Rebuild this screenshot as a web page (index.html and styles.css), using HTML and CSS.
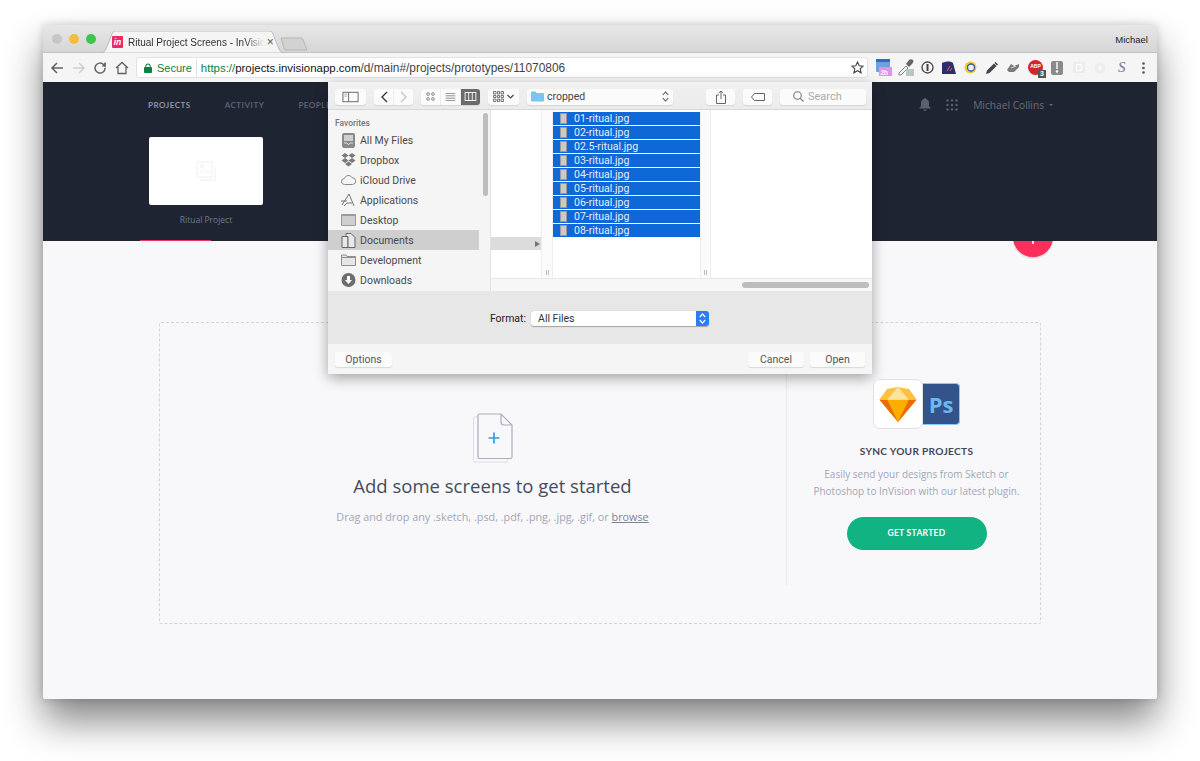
FILE: index.html
```html
<!DOCTYPE html>
<html lang="en">
<head>
<meta charset="utf-8">
<title>Ritual Project Screens - InVision</title>
<link rel="stylesheet" href="styles.css">
</head>
<body>
<div class="window">
  <div class="titlebar">
    <div class="lights"><i class="light l-grey"></i><i class="light l-yellow"></i><i class="light l-green"></i></div>
    <div class="tab">
      <svg class="tab-shape" width="185" height="22" viewBox="0 0 185 22"><path d="M0 22c4 0 5-2 6-4L12 3c.6-2 1.600-3 4-3h153c2.400 0 3.400 1 4 3l6 15c1 2 2 4 6 4z" fill="#f5f5f5" stroke="#bdbdbd"/></svg>
      <span class="favicon">in</span>
      <span class="tab-title">Ritual Project Screens - InVisio</span>
      <span class="tab-close">×</span>
    </div>
    <svg class="newtab" width="28" height="14" viewBox="0 0 28 14"><path d="M1 1h20c1 0 1.500.5 2 1.500L27 13H6c-1 0-1.500-.5-2-1.500z" fill="#d2d2d2" stroke="#b5b5b5"/></svg>
    <span class="profile">Michael</span>
  </div>
  <div class="toolbar">
    <svg class="nav" width="16" height="16" viewBox="0 0 16 16"><path d="M14 8H3M8 3L3 8l5 5" fill="none" stroke="#5f6368" stroke-width="1.500"/></svg>
    <svg class="nav" width="16" height="16" viewBox="0 0 16 16"><path d="M2 8h11M8 3l5 5-5 5" fill="none" stroke="#cfcfcf" stroke-width="1.500"/></svg>
    <svg class="nav" width="16" height="16" viewBox="0 0 16 16"><path d="M13 8a5 5 0 1 1-1.500-3.500L13 6V2.500" fill="none" stroke="#5f6368" stroke-width="1.500"/><path d="M13.500 6.500H9.500l4-4z" fill="#5f6368"/></svg>
    <svg class="nav" width="16" height="16" viewBox="0 0 16 16"><path d="M2 8l6-5.500L14 8M4 7v6.500h8V7" fill="none" stroke="#5f6368" stroke-width="1.300"/></svg>
    <div class="omnibox">
      <svg class="lock" width="8" height="10" viewBox="0 0 9 11"><path d="M2 5V3.500a2.500 2.500 0 0 1 5 0V5" fill="none" stroke="#0b8043" stroke-width="1.200"/><rect y="4.500" width="9" height="6.500" rx="1" fill="#0b8043"/></svg>
      <span class="secure">Secure</span>
      <span class="url"><span class="https">https://</span>projects.invisionapp.com<span class="path">/d/main#/projects/prototypes/11070806</span></span>
      <svg class="star" width="13" height="13" viewBox="0 0 13 13"><path d="M6.500 1l1.700 3.700 4 .4-3 2.700.9 4-3.600-2.100-3.600 2.100.9-4-3-2.700 4-.4z" fill="none" stroke="#444" stroke-width="1.100"/></svg>
    </div>
    <div class="exts">
      <svg width="16" height="17" viewBox="0 0 16 17"><rect x="0" y="0" width="14" height="13" rx="1" fill="#6f9fe0"/><rect x="0" y="0" width="14" height="3" fill="#2f6cc0"/><rect x="3" y="8" width="13" height="9" fill="#d995e6"/><text x="4.500" y="15.500" class="ext-text">2h</text></svg>
      <svg width="16" height="17" viewBox="0 0 16 17"><path d="M1 14l7-7 2 2-7 7H1z" fill="#f2f2f2" stroke="#8b8b8b"/><path d="M8 5l3-4c1-1 3-1 4 0s0 3-1 4l-3 3z" fill="#666"/><rect x="8" y="10" width="8" height="7" fill="#b9c7c3"/></svg>
      <svg width="13" height="13" viewBox="0 0 13 13"><circle cx="6.500" cy="6.500" r="5.500" fill="none" stroke="#444" stroke-width="1.300"/><rect x="5.500" y="3" width="2" height="7" fill="#444"/></svg>
      <svg width="14" height="13" viewBox="0 0 14 13"><path d="M0 13V2c4-2 9-2 11 0l3 11z" fill="#27306e"/><path d="M5 10l3-5M8 10l2-3" stroke="#e14b4b" stroke-width="1.200"/></svg>
      <svg width="13" height="13" viewBox="0 0 13 13"><circle cx="6.500" cy="6.500" r="6" fill="#f1c836"/><circle cx="7" cy="6.500" r="3.500" fill="#f5f0d8" stroke="#2c5fa8" stroke-width="1.300"/></svg>
      <svg width="12" height="12" viewBox="0 0 12 12"><path d="M0 12l1-3.500L8 1.500 10.500 4l-7 7z" fill="#444"/><path d="M9 .5l2.500 2.500" stroke="#444" stroke-width="1.500"/></svg>
      <svg width="13" height="11" viewBox="0 0 13 11"><path d="M0 8l4-6 3 2 5-2v3l-5 5H2z" fill="#7a7a7a"/><path d="M4 6l5-2" stroke="#ddd"/></svg>
      <span class="adblock"><span class="ab-text">ABP</span><span class="ab-num">3</span></span>
      <svg width="12" height="14" viewBox="0 0 12 14"><rect width="12" height="14" rx="2" fill="#8a8a8a"/><path d="M6 1v7" stroke="#fff" stroke-width="1.400"/><circle cx="6" cy="10.500" r="1.300" fill="#fff"/></svg>
      <svg width="12" height="11" viewBox="0 0 12 11"><rect width="12" height="11" rx="1.500" fill="#ececec"/><rect x="3.500" y="2.500" width="5" height="6" fill="none" stroke="#fff" stroke-width="1.300"/></svg>
      <svg width="12" height="12" viewBox="0 0 12 12"><circle cx="6" cy="6" r="5.500" fill="#ededed"/><circle cx="6" cy="6" r="2" fill="#f8f8f8"/></svg>
      <span class="ext-s">S</span>
      <svg class="kebab" width="3" height="12" viewBox="0 0 3 12"><circle cx="1.500" cy="1.500" r="1.300"/><circle cx="1.500" cy="6" r="1.300"/><circle cx="1.500" cy="10.500" r="1.300"/></svg>
    </div>
  </div>

  <header class="app-header">
    <nav class="app-nav">
      <span class="nav-item is-active">PROJECTS</span>
      <span class="nav-item">ACTIVITY</span>
      <span class="nav-item">PEOPLE</span>
      <div class="nav-right">
        <svg width="12" height="13" viewBox="0 0 12 13"><path d="M6 0c.6 0 1 .4 1 1 2 .5 3 2 3 4v3l2 2.500H0L2 8V5c0-2 1-3.500 3-4 0-.6.400-1 1-1zM4.500 11.500h3a1.500 1.500 0 0 1-3 0z" fill="#5b606e"/></svg>
        <svg class="grid-icon" width="12" height="12" viewBox="0 0 12 12" fill="#5b606e"><circle cx="1.500" cy="1.500" r="1.200"/><circle cx="6" cy="1.500" r="1.200"/><circle cx="10.500" cy="1.500" r="1.200"/><circle cx="1.500" cy="6" r="1.200"/><circle cx="6" cy="6" r="1.200"/><circle cx="10.500" cy="6" r="1.200"/><circle cx="1.500" cy="10.500" r="1.200"/><circle cx="6" cy="10.500" r="1.200"/><circle cx="10.500" cy="10.500" r="1.200"/></svg>
        <span class="user">Michael Collins</span><span class="user-caret"></span>
      </div>
    </nav>
    <div class="project-card">
      <div class="thumb">
        <svg width="20" height="20" viewBox="0 0 20 20" fill="none" stroke="#f0f0f2"><rect x="1" y="1" width="15" height="15"/><path d="M4 19h15V5M3 13l4-4 3 3 3-2 3 3"/><circle cx="6" cy="5" r="1.500"/></svg>
      </div>
      <div class="thumb-label">Ritual Project</div>
    </div>
    <div class="active-bar"></div>
  </header>

  <main class="content">
    <div class="fab-clip"><div class="fab"><span class="fab-plus"></span></div></div>
    <div class="dropzone">
      <section class="drop-left">
        <svg class="doc-icon" width="40" height="50" viewBox="0 0 40 50" fill="none"><path d="M5 4H2a1.500 1.500 0 0 0-1.500 1.500v42A1.500 1.500 0 0 0 2 49h31a1.500 1.500 0 0 0 1.500-1.500V46" stroke="#dcdee6"/><path d="M6 1h22l11 11v32a1.500 1.500 0 0 1-1.500 1.500h-31A1.500 1.500 0 0 1 5 44V2.500A1.500 1.500 0 0 1 6 1z" fill="#f8f8fb" stroke="#a9adbd" stroke-width="1.200"/><path d="M28 1v8a3 3 0 0 0 3 3h8" stroke="#a9adbd" stroke-width="1.200"/><path d="M15.500 25h11M21 19.500v11" stroke="#2a9fe9" stroke-width="1.700"/></svg>
        <h1 class="drop-title">Add some screens to get started</h1>
        <p class="drop-text">Drag and drop any .sketch, .psd, .pdf, .png, .jpg, .gif, or <u>browse</u></p>
      </section>
      <aside class="drop-right">
        <div class="app-logos">
          <span class="sketch-tile">
            <svg width="38" height="35" viewBox="0 0 38 36"><path d="M19 36L0 13 8 2h22l8 11z" fill="#fdb300"/><path d="M0 13h38L19 36z" fill="#ea6c00"/><path d="M8 13h22L19 36z" fill="#fdad00"/><path d="M8 2l11-2 11 2 8 11H0z" fill="#fdc340"/><path d="M8 13L19 0l11 13z" fill="#fee3a0"/></svg>
          </span>
          <span class="ps-tile">Ps</span>
        </div>
        <h2 class="sync-title">SYNC YOUR PROJECTS</h2>
        <p class="sync-text">Easily send your designs from Sketch or<br>Photoshop to InVision with our latest plugin.</p>
        <a class="sync-btn">GET STARTED</a>
      </aside>
    </div>
  </main>

  <div class="dialog">
    <div class="d-toolbar">
      <span class="d-btn b-side"><svg width="17" height="12" viewBox="0 0 18 12" fill="none" stroke="#666"><rect x="1" y="1" width="16" height="10"/><path d="M7 1v10"/><path d="M2.500 3h3M2.500 5h3" stroke="#aaa"/></svg></span>
      <span class="d-group g-nav">
        <span class="d-seg s-nav"><svg width="8" height="12" viewBox="0 0 8 12" fill="none" stroke="#333" stroke-width="1.300"><path d="M7 1L2 6l5 5"/></svg></span>
        <span class="d-seg s-nav"><svg width="8" height="12" viewBox="0 0 8 12" fill="none" stroke="#c4c4c4" stroke-width="1.300"><path d="M1 1l5 5-5 5"/></svg></span>
      </span>
      <span class="d-group g-view">
        <span class="d-seg s-view"><svg width="9" height="9" viewBox="0 0 11 11" fill="none" stroke="#666"><rect x="1" y="1" width="3" height="3" rx="1"/><rect x="7" y="1" width="3" height="3" rx="1"/><rect x="1" y="7" width="3" height="3" rx="1"/><rect x="7" y="7" width="3" height="3" rx="1"/></svg></span>
        <span class="d-seg s-view"><svg width="11" height="8" viewBox="0 0 12 10" stroke="#777"><path d="M0 .5h12M0 3.500h12M0 6.500h12M0 9.500h12"/></svg></span>
        <span class="d-seg s-view is-on"><svg width="13" height="9" viewBox="0 0 13 10" fill="none" stroke="#fff"><rect x=".5" y=".5" width="12" height="9"/><path d="M4.500 .5v9M8.500 .5v9"/></svg></span>
      </span>
      <span class="d-btn b-arrange"><svg width="11" height="11" viewBox="0 0 11 11" fill="none" stroke="#777"><path d="M.5.500h2.500v2.500H.5zM4.500.500h2v2.500h-2zM8 .5h2.500v2.500H8zM.5 4.500h2.500v2H.5zM4.500 4.500h2v2h-2zM8 4.500h2.500v2H8zM.5 8h2.500v2.500H.5zM4.500 8h2v2.500h-2zM8 8h2.500v2.500H8z"/></svg><svg width="7" height="5" viewBox="0 0 7 5" fill="none" stroke="#444" stroke-width="1.200"><path d="M.5 1l3 3 3-3"/></svg></span>
      <span class="d-btn b-path">
        <svg width="13" height="11" viewBox="0 0 13 10"><path d="M0 1a1 1 0 0 1 1-1h3.500l1 1.500H12a1 1 0 0 1 1 1V9a1 1 0 0 1-1 1H1a1 1 0 0 1-1-1z" fill="#79c6f2"/></svg>
        <span class="path-name">cropped</span>
        <svg class="updown" width="7" height="11" viewBox="0 0 7 11" fill="none" stroke="#555" stroke-width="1.100"><path d="M.8 4l2.700-3 2.700 3M.8 7l2.700 3 2.700-3"/></svg>
      </span>
      <span class="d-btn b-share"><svg width="10" height="14" viewBox="0 0 10 14" fill="none" stroke="#666"><path d="M3 5H.5v8.500h9V5H7M5 9V1M2.800 3L5 1l2.200 2"/></svg></span>
      <span class="d-btn b-tag"><svg width="14" height="8" viewBox="0 0 14 8" fill="none" stroke="#666"><path d="M3.500.5H13.500v7H3.500L.5 4z"/></svg></span>
      <span class="d-btn b-search"><svg width="11" height="11" viewBox="0 0 11 11" fill="none" stroke="#777" stroke-width="1.100"><circle cx="4.500" cy="4.500" r="3.800"/><path d="M7.300 7.300L10.500 10.500"/></svg><span class="search-ph">Search</span></span>
    </div>
    <div class="browser">
      <div class="sidebar">
        <div class="side-head">Favorites</div>
        <div class="side-item"><svg width="15" height="15" viewBox="0 0 15 15"><rect x="1" y="0" width="13" height="15" rx="2" fill="#8a8a8a"/><rect x="3" y="2" width="9" height="6" fill="#cfcfcf"/><path d="M3 10h3l1 1.500h1l1-1.500h3" stroke="#ddd" fill="none"/></svg>All My Files</div>
        <div class="side-item"><svg width="15" height="14" viewBox="0 0 15 14" fill="#7a7a7a"><path d="M4 0l3.500 2.500L4 5 .5 2.500zM11 0l3.500 2.500L11 5 7.500 2.500zM4 5l3.500 2.500L4 10 .5 7.500zM11 5l3.500 2.500L11 10 7.500 7.500zM4 11l3.500-2.500L11 11l-3.500 2.500z"/></svg>Dropbox</div>
        <div class="side-item"><svg width="15" height="10" viewBox="0 0 15 10" fill="none" stroke="#8a8a8a"><path d="M3.500 9.500a3 3 0 0 1 0-6 4 4 0 0 1 7.500-.8 3.400 3.400 0 0 1 .5 6.800z"/></svg>iCloud Drive</div>
        <div class="side-item"><svg width="15" height="14" viewBox="0 0 15 14" fill="none" stroke="#777"><path d="M1 12L8 1l5 12M0 8h6M3 13l3-3h5"/></svg>Applications</div>
        <div class="side-item"><svg width="15" height="12" viewBox="0 0 15 12"><rect width="15" height="12" rx="1" fill="#9b9b9b"/><rect x="1" y="2" width="13" height="9" fill="#cfcfcf"/></svg>Desktop</div>
        <div class="side-item is-selected"><svg width="14" height="15" viewBox="0 0 14 15" fill="#e8e8e8" stroke="#666"><path d="M.5 3.500h6v11h-6z"/><path d="M4.500.5h5l4 4v10h-7v-11h-2z"/></svg>Documents</div>
        <div class="side-item"><svg width="15" height="12" viewBox="0 0 15 12" fill="#e6e6e6" stroke="#8f8f8f"><path d="M.5 11.500V1h4.500l1 1.500h8.500v9z"/><path d="M.5 3.500h14"/></svg>Development</div>
        <div class="side-item"><svg width="14" height="14" viewBox="0 0 14 14"><circle cx="7" cy="7" r="7" fill="#6e6e6e"/><path d="M5.500 3h3v4h2L7 11 3.500 7h2z" fill="#fff"/></svg>Downloads</div>
        <div class="side-scroll"></div>
      </div>
      <div class="columns">
        <div class="cols">
          <div class="col col-a"><div class="parent-row"><span class="tri"></span></div></div>
          <div class="col-handle"><span class="grip"></span></div>
          <div class="col col-b">
            <div class="file"><i class="file-ico"></i>01-ritual.jpg</div>
            <div class="file"><i class="file-ico"></i>02-ritual.jpg</div>
            <div class="file"><i class="file-ico"></i>02.5-ritual.jpg</div>
            <div class="file"><i class="file-ico"></i>03-ritual.jpg</div>
            <div class="file"><i class="file-ico"></i>04-ritual.jpg</div>
            <div class="file"><i class="file-ico"></i>05-ritual.jpg</div>
            <div class="file"><i class="file-ico"></i>06-ritual.jpg</div>
            <div class="file"><i class="file-ico"></i>07-ritual.jpg</div>
            <div class="file"><i class="file-ico"></i>08-ritual.jpg</div>
          </div>
          <div class="col-handle handle-b"><span class="grip"></span></div>
          <div class="col col-c"></div>
        </div>
        <div class="hscroll"><span class="hthumb"></span></div>
      </div>
    </div>
    <div class="format-row">
      <span class="format-label">Format:</span>
      <span class="format-select">All Files<span class="format-stepper"><svg width="7" height="11" viewBox="0 0 7 11" fill="none" stroke="#fff" stroke-width="1.200"><path d="M.8 4l2.700-3 2.700 3M.8 7l2.700 3 2.700-3"/></svg></span></span>
    </div>
    <div class="d-footer">
      <span class="f-btn f-options">Options</span>
      <span class="f-btn f-cancel">Cancel</span>
      <span class="f-btn f-open">Open</span>
    </div>
  </div>
</div>
</body>
</html>
```

FILE: styles.css
```css
* { box-sizing: border-box; }
html, body { margin: 0; height: 761px; overflow: hidden; }
body { background: #fff; padding: 25px 43px 0; font-family: "Open Sans", sans-serif; }

.window {
  position: relative;
  width: 1114px;
  height: 674px;
  border-radius: 4px 4px 2px 2px;
  background: #f8f8fb;
  box-shadow: 0 22px 38px rgba(0,0,0,.48), 0 0 8px rgba(0,0,0,.18);
  display: flex;
  flex-direction: column;
}

/* Browser chrome */
.titlebar {
  height: 28px;
  flex: none;
  display: flex;
  align-items: flex-end;
  background: linear-gradient(#e7e7e7, #d6d6d6);
  border-bottom: 1px solid #c4c4c4;
  border-radius: 4px 4px 0 0;
  font-family: "Liberation Sans", sans-serif;
}
.lights { display: flex; gap: 7px; padding: 0 0 8px 9px; width: 58px; flex: none; }
.light { width: 10px; height: 10px; border-radius: 50%; flex: none; }
.l-grey { background: #c7c7c7; }
.l-yellow { background: #f5bd3f; }
.l-green { background: #3cc64c; }
.tab {
  position: relative;
  width: 185px;
  height: 22px;
  margin-bottom: -1px;
  margin-left: -1px;
  flex: none;
  display: flex;
  align-items: center;
  padding: 0 0 0 12px;
}
.tab-shape { position: absolute; left: 0; top: 0; }
.favicon {
  position: relative;
  width: 11px;
  height: 12px;
  background: #ed2b62;
  color: #fff;
  border-radius: 1px;
  font: italic bold 8.500px/12px "Liberation Sans", sans-serif;
  text-align: center;
  flex: none;
}
.tab-title {
  position: relative;
  margin-left: 5px;
  flex: none;
  white-space: nowrap;
  font-size: 10px;
  color: #333;
  -webkit-mask-image: linear-gradient(90deg, #000 85%, transparent 99%);
  mask-image: linear-gradient(90deg, #000 85%, transparent 99%);
}
.tab-close { position: relative; margin-left: 1px; font-size: 12px; color: #555; line-height: 12px; flex: none; }
.newtab { margin: 0 0 1px -5px; flex: none; }
.profile { margin-left: auto; padding: 0 9px 7px 0; font-size: 9.500px; color: #222; }

.toolbar {
  height: 29px;
  flex: none;
  display: flex;
  align-items: center;
  background: #f5f5f5;
  padding-left: 6px;
  gap: 5.500px;
  font-family: "Liberation Sans", sans-serif;
}
.nav { flex: none; }
.omnibox {
  width: 732px;
  height: 21px;
  margin-left: 1px;
  flex: none;
  display: flex;
  align-items: center;
  background: #fff;
  border: 1px solid #e2e2e2;
  border-radius: 3px;
  padding: 0 3px 0 7px;
  font-size: 11.450px;
  white-space: nowrap;
}
.lock { flex: none; }
.secure { color: #0b8043; margin-left: 5px; font-size: 11px; padding-right: 4px; border-right: 1px solid #ddd; line-height: 18px; }
.url { margin-left: 4px; color: #111; }
.https { color: #0b8043; }
.path { color: #444; font-size: 11.900px; }
.star { margin-left: auto; }
.exts {
  flex: 1;
  display: grid;
  grid-template-columns: repeat(13, 21.600px);
  align-items: center;
  justify-items: center;
}
.ext-text { font: 700 6.500px "Liberation Sans", sans-serif; fill: #fff; }
.adblock {
  position: relative;
  width: 15px;
  height: 15px;
  border-radius: 50%;
  background: #d8232a;
  text-align: center;
}
.ab-text { display: block; color: #fff; font: 700 5px/13px "Liberation Sans", sans-serif; }
.ab-num {
  position: absolute;
  right: -3px;
  bottom: -3px;
  background: #555;
  color: #fff;
  font-size: 7px;
  line-height: 8px;
  padding: 0 2px;
  font-weight: 700;
}
.ext-s { font: italic 15px/1 "Liberation Serif", serif; color: #777; }
.kebab { fill: #555; }

/* App header */
.app-header {
  height: 159px;
  flex: none;
  position: relative;
  background: #1f2433;
  color: #7a7f8c;
}
.app-nav {
  height: 45px;
  display: flex;
  align-items: center;
  padding-left: 105px;
  gap: 34px;
}
.nav-item {
  font: 700 8px/1 "Lato", sans-serif;
  letter-spacing: .5px;
  color: #5c6170;
}
.nav-item.is-active { color: #8f93a0; }
.nav-right {
  margin-left: auto;
  display: flex;
  align-items: center;
  padding-right: 104px;
  color: #686d7b;
}
.grid-icon { margin-left: 15px; }
.user { margin-left: 15px; font-size: 10.200px; }
.user-caret {
  margin-left: 5px;
  margin-top: 2px;
  border: 2px solid transparent;
  border-top: 2px solid #686d7b;
}
.project-card { width: 114px; margin: 10px 0 0 106px; text-align: center; }
.thumb {
  height: 68px;
  background: #fff;
  border-radius: 2px;
  display: flex;
  align-items: center;
  justify-content: center;
}
.thumb-label { margin-top: 9px; font-size: 8.500px; color: #737886; }
.active-bar { position: absolute; left: 97px; bottom: 0; width: 71px; height: 1px; background: #f0325f; }

/* Drop zone */
.content { position: relative; flex: 1; padding: 81px 116px 0; }
.fab-clip {
  position: absolute;
  left: 970px;
  top: 0;
  width: 40px;
  height: 18px;
  overflow: hidden;
}
.fab {
  width: 40px;
  height: 40px;
  margin-top: -24px;
  border-radius: 50%;
  background: #fb2e5d;
  box-shadow: 0 1px 2px rgba(0,0,0,.2);
  display: flex;
  justify-content: center;
}
.fab-plus { width: 2px; height: 3px; background: #ffd9e2; margin-top: 24px; }
.dropzone {
  height: 302px;
  border: 1px dashed #d4d4da;
  border-radius: 2px;
  display: flex;
}
.drop-left {
  flex: 1;
  text-align: center;
  padding: 90px 0 0 39px;
}
.doc-icon { display: block; margin: 0 auto; }
.drop-title { margin: 10px 0 0; font-size: 18.500px; line-height: 26px; font-weight: 400; color: #454b5e; }
.drop-text { margin: 10px 0 0; font-size: 10.800px; line-height: 16px; color: #a2a6b5; }
.drop-text u { color: #7e8393; }
.drop-right {
  width: 254px;
  margin-top: 46px;
  height: 216px;
  border-left: 1px solid #e9e9ee;
  display: flex;
  flex-direction: column;
  align-items: center;
  padding: 10px 0 0 6px;
}
.app-logos { display: flex; align-items: center; height: 50px; }
.sketch-tile {
  position: relative;
  z-index: 1;
  width: 50px;
  height: 50px;
  background: #fff;
  border: 1px solid #dfe1e7;
  border-radius: 7px;
  display: flex;
  align-items: center;
  justify-content: center;
}
.ps-tile {
  width: 38px;
  height: 42px;
  margin-left: -1px;
  background: #33538a;
  border: 1px solid #8ac8f5;
  border-radius: 0 4px 4px 0;
  color: #6cb9f0;
  font: 700 22px/40px "Open Sans", sans-serif;
  text-align: center;
}
.sync-title { margin: 14px 0 0; font: 700 10.150px/16px "Lato", sans-serif; letter-spacing: .3px; color: #434859; }
.sync-text { margin: 7px 0 0; text-align: center; font-size: 10px; line-height: 17px; color: #a2a6b5; }
.sync-btn {
  margin-top: 17px;
  width: 140px;
  height: 33px;
  border-radius: 17px;
  background: #12b382;
  color: #fff;
  font: 700 8.500px/33px "Lato", sans-serif;
  letter-spacing: .3px;
  text-align: center;
}

/* Open dialog */
.dialog {
  position: absolute;
  left: 285px;
  top: 57px;
  width: 544px;
  height: 292px;
  background: #f5f5f5;
  box-shadow: 0 4px 14px rgba(0,0,0,.35);
  border-radius: 0 0 3px 3px;
  display: flex;
  flex-direction: column;
  font-family: "Roboto", "Liberation Sans", sans-serif;
  font-size: 10.500px;
  color: #444;
}
.d-toolbar {
  height: 28px;
  flex: none;
  display: flex;
  align-items: center;
  background: linear-gradient(#f1f1f1, #ebebeb);
  border-bottom: 1px solid #d8d8d8;
  padding: 2px 0 0 7px;
}
.d-btn, .d-seg {
  height: 16px;
  display: flex;
  align-items: center;
  justify-content: center;
  background: #fbfbfb;
  flex: none;
}
.d-btn { border-radius: 3px; box-shadow: 0 1px 1px rgba(0,0,0,.1); }
.d-group { display: flex; gap: 1px; border-radius: 3px; overflow: hidden; box-shadow: 0 1px 1px rgba(0,0,0,.1); flex: none; }
.b-side { width: 31px; }
.g-nav { margin-left: 8px; }
.s-nav { width: 19px; }
.g-view { margin-left: 8px; }
.s-view { width: 19px; }
.s-view.is-on { background: #6b6b6b; }
.b-arrange { width: 31px; margin-left: 8px; gap: 3px; }
.b-path { width: 146px; margin-left: 8px; justify-content: flex-start; padding: 0 4px; }
.path-name { margin-left: 3px; color: #444; }
.updown { margin-left: auto; }
.b-share { width: 29px; margin-left: 33px; }
.b-tag { width: 29px; margin-left: 8px; }
.b-search { width: 86px; margin-left: 8px; justify-content: flex-start; padding-left: 13px; gap: 4px; }
.search-ph { color: #aaa; font-size: 11px; }

.browser { flex: 1; display: flex; min-height: 0; }
.sidebar { position: relative; width: 163px; flex: none; background: #f5f5f5; border-right: 1px solid #e3e3e3; padding: 6px 0 0; overflow: hidden; }
.side-head { padding-left: 7px; font-size: 8.500px; line-height: 14px; font-weight: 500; color: #777; }
.side-item {
  height: 20px;
  width: 151px;
  display: flex;
  align-items: center;
  gap: 4px;
  padding-left: 13px;
  color: #4a4a4a;
}
.side-item.is-selected { background: #cfcfcf; }
.side-item svg { flex: none; width: 15px; }
.side-scroll { position: absolute; right: 2px; top: 3px; width: 5px; height: 83px; border-radius: 3px; background: #bdbdbd; }
.columns { flex: 1; display: flex; flex-direction: column; min-width: 0; }
.cols { flex: 1; display: flex; background: #fff; min-height: 0; }
.col { background: #fff; }
.col-a { width: 50px; padding-top: 127px; }
.parent-row { height: 13px; background: #dcdcdc; display: flex; align-items: center; justify-content: flex-end; padding-right: 1px; }
.tri { border: 3px solid transparent; border-left: 5px solid #777; border-right: 0; }
.col-handle { width: 12px; display: flex; align-items: flex-end; justify-content: center; padding-bottom: 3px; background: #fbfbfb; border-left: 1px solid #eee; border-right: 1px solid #eee; }
.handle-b { width: 11px; }
.grip { width: 3px; height: 5px; border-left: 1px solid #bbb; border-right: 1px solid #bbb; }
.col-b { width: 147px; padding-top: 2px; }
.col-c { flex: 1; }
.file {
  height: 13px;
  margin-bottom: 1px;
  display: flex;
  align-items: center;
  background: #0f68d8;
  color: #e4eefb;
  padding-left: 7px;
  line-height: 14px;
}
.file-ico { width: 7px; height: 11px; background: #cfc9c3; border: 1px solid #9a9a9a; margin-right: 7px; flex: none; }
.hscroll { height: 13px; flex: none; background: #f7f7f7; border-top: 1px solid #e8e8e8; position: relative; }
.hthumb { position: absolute; right: 3px; top: 3px; width: 127px; height: 6px; border-radius: 3px; background: #bdbdbd; }

.format-row {
  height: 53px;
  flex: none;
  display: flex;
  align-items: center;
  justify-content: center;
  background: #e8e7e8;
  padding: 2px 1px 0 0;
}
.format-label { color: #222; margin-right: 5px; }
.format-select {
  position: relative;
  width: 178px;
  height: 15px;
  background: #fff;
  border-radius: 3px;
  box-shadow: 0 .5px 1px rgba(0,0,0,.3);
  padding-left: 7px;
  line-height: 16px;
  color: #333;
}
.format-stepper {
  position: absolute;
  right: 0;
  top: 0;
  width: 13px;
  height: 15px;
  background: #2a7ef0;
  border-radius: 0 3px 3px 0;
  display: flex;
  align-items: center;
  justify-content: center;
}
.d-footer {
  height: 30px;
  flex: none;
  display: flex;
  align-items: center;
  padding: 0 7px;
  gap: 6px;
  background: #f5f5f5;
}
.f-btn {
  height: 15px;
  background: #fbfbfb;
  border-radius: 3px;
  box-shadow: 0 1px 1px rgba(0,0,0,.12);
  text-align: center;
  line-height: 15px;
  color: #555;
}
.f-options { width: 57px; }
.f-cancel { width: 56px; margin-left: auto; }
.f-open { width: 55px; }
```
